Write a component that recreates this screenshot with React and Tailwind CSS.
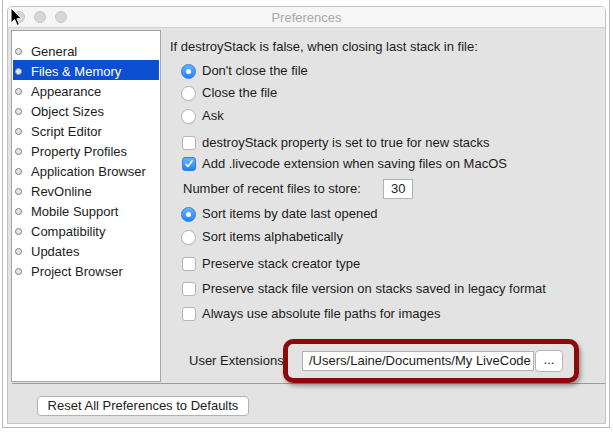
import React from "react";

const items = [
  "General",
  "Files & Memory",
  "Appearance",
  "Object Sizes",
  "Script Editor",
  "Property Profiles",
  "Application Browser",
  "RevOnline",
  "Mobile Support",
  "Compatibility",
  "Updates",
  "Project Browser",
];

function Radio({ checked }) {
  return checked ? (
    <span className="flex h-[15px] w-[15px] shrink-0 items-center justify-center rounded-full border border-[#2f7fe0] bg-gradient-to-b from-[#69b1fb] to-[#1c82fb]">
      <span className="h-[5px] w-[5px] rounded-full bg-white" />
    </span>
  ) : (
    <span className="h-[15px] w-[15px] shrink-0 rounded-full border border-[#b5b5b5] bg-white shadow-[0_1px_0_rgba(0,0,0,0.05)]" />
  );
}

function Check({ checked }) {
  return checked ? (
    <span className="flex h-[14px] w-[14px] shrink-0 items-center justify-center rounded-[3px] border border-[#2f7fe0] bg-gradient-to-b from-[#69b1fb] to-[#1c82fb]">
      <svg width="10" height="10" viewBox="0 0 10 10">
        <path d="M2 5.2 L4 7.5 L8 2" fill="none" stroke="white" strokeWidth="1.6" strokeLinecap="round" strokeLinejoin="round" />
      </svg>
    </span>
  ) : (
    <span className="h-[14px] w-[14px] shrink-0 rounded-[3px] border border-[#b5b5b5] bg-white" />
  );
}

function Row({ children, mt, ml }) {
  return (
    <div className={`flex h-[20px] items-center ${mt} ${ml}`}>{children}</div>
  );
}

export default function App() {
  return (
    <div className="relative h-[432px] w-[613px] overflow-hidden bg-white font-['Liberation_Sans',Arial,sans-serif] text-[13px] text-[#1c1c1c]">
      <div className="ml-[2px] h-[428px] w-[608px] border-x border-b border-[#b8b8b8] pl-[4px] pt-[6px]">
        <div className="flex h-[418px] w-[599px] flex-col overflow-hidden rounded-t-[5px] border border-[#c4c4c4]">
          {/* title bar */}
          <div className="grid h-[21px] shrink-0 grid-cols-[1fr_auto_1fr] items-center border-b border-[#d2d2d2] bg-[#f6f6f6]">
            <div className="flex items-center gap-[9px] pl-[5px]">
              <span className="h-[12px] w-[12px] rounded-full border border-[#c9c9c9] bg-[#d6d6d6]" />
              <span className="h-[12px] w-[12px] rounded-full border border-[#c9c9c9] bg-[#d6d6d6]" />
              <span className="h-[12px] w-[12px] rounded-full border border-[#c9c9c9] bg-[#d6d6d6]" />
            </div>
            <div className="pt-[1px] text-[13px] text-[#a9a9a9]">Preferences</div>
            <div />
          </div>
          {/* content */}
          <div className="flex flex-1 flex-col bg-[#e3e3e3]">
            <div className="flex pl-[3px] pt-[2px]">
              <div className="h-[352px] w-[150px] shrink-0 border border-[#a6a6a6] bg-white px-[1px] pt-[9px]">
                {items.map((it, i) => {
                  const sel = i === 1;
                  return (
                    <div
                      key={it}
                      className={`flex h-[20px] items-center gap-[9px] pl-[2px] ${sel ? "bg-[#0c4fd0] text-white" : ""}`}
                    >
                      <span
                        className={`mt-[2px] h-[7px] w-[7px] rounded-full border ${sel ? "border-[#9a9a9a] bg-[#e6e6e6]" : "border-[#7e7e7e] bg-[#e4e4e4]"}`}
                      />
                      <span className="pt-[3px]">{it}</span>
                    </div>
                  );
                })}
              </div>
              <div className="flex flex-col">
                <Row mt="mt-[7px]" ml="ml-[9px]">
                  If destroyStack is false, when closing last stack in file:
                </Row>
                <Row mt="mt-[4px]" ml="ml-[20px]">
                  <Radio checked />
                  <span className="ml-[6px]">Don't close the file</span>
                </Row>
                <Row mt="mt-[2px]" ml="ml-[20px]">
                  <Radio />
                  <span className="ml-[6px]">Close the file</span>
                </Row>
                <Row mt="mt-[3px]" ml="ml-[20px]">
                  <Radio />
                  <span className="ml-[6px]">Ask</span>
                </Row>
                <Row mt="mt-[7px]" ml="ml-[21px]">
                  <Check />
                  <span className="ml-[6px]">destroyStack property is set to true for new stacks</span>
                </Row>
                <Row mt="mt-[1px]" ml="ml-[21px]">
                  <Check checked />
                  <span className="ml-[6px]">Add .livecode extension when saving files on MacOS</span>
                </Row>
                <Row mt="mt-[5px]" ml="ml-[22px]">
                  <span className="w-[200px]">Number of recent files to store:</span>
                  <span className="flex h-[20px] w-[30px] items-center border border-[#b2b2b2] bg-white pl-[7px]">30</span>
                </Row>
                <Row mt="mt-[5px]" ml="ml-[20px]">
                  <Radio checked />
                  <span className="ml-[6px]">Sort items by date last opened</span>
                </Row>
                <Row mt="mt-[3px]" ml="ml-[20px]">
                  <Radio />
                  <span className="ml-[6px]">Sort items alphabetically</span>
                </Row>
                <Row mt="mt-[7px]" ml="ml-[21px]">
                  <Check />
                  <span className="ml-[6px]">Preserve stack creator type</span>
                </Row>
                <Row mt="mt-[5px]" ml="ml-[21px]">
                  <Check />
                  <span className="ml-[6px]">Preserve stack file version on stacks saved in legacy format</span>
                </Row>
                <Row mt="mt-[5px]" ml="ml-[21px]">
                  <Check />
                  <span className="ml-[6px]">Always use absolute file paths for images</span>
                </Row>
                <div className="ml-[28px] mt-[26px] flex h-[22px] items-center">
                  <span className="w-[113px]">User Extensions:</span>
                  <span className="flex h-[20px] w-[232px] items-center overflow-hidden whitespace-nowrap border border-[#b2b2b2] bg-white pl-[6px]">
                    /Users/Laine/Documents/My LiveCode
                  </span>
                  <span className="ml-[1px] flex h-[22px] w-[28px] items-center justify-center rounded-[4px] border border-[#b5b5b5] bg-white pb-[3px]">
                    ...
                  </span>
                </div>
              </div>
            </div>
            <div className="ml-[4px] mt-[1px] h-px bg-[#9c9c9c]" />
            <div className="ml-[29px] mt-[12px] flex h-[20px] w-[212px] items-center justify-center rounded-[4px] border border-[#b2b2b2] bg-white">
              Reset All Preferences to Defaults
            </div>
          </div>
        </div>
      </div>

      {/* red annotation box */}
      <div className="absolute left-[283px] top-[339px] h-[44px] w-[296px] rounded-[10px] border-[5px] border-[#8e0a0a] shadow-[2px_3px_4px_rgba(0,0,0,0.35)]" />

      {/* mouse cursor */}
      <svg className="absolute left-[10px] top-[7px]" width="14" height="20" viewBox="0 0 14 20">
        <path d="M1 1 L1 16 L4.6 12.6 L7.2 18.4 L9.4 17.4 L6.9 11.8 L11.6 11.8 Z" fill="black" stroke="white" strokeWidth="1" strokeLinejoin="round" />
      </svg>
    </div>
  );
}
